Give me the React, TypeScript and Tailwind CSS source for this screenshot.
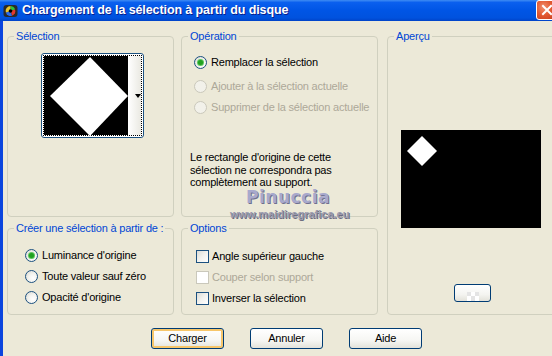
import React from "react";

function Radio({ checked = false, disabled = false }: { checked?: boolean; disabled?: boolean }) {
  return (
    <span
      className={
        "relative inline-flex items-center justify-center w-[13px] h-[13px] rounded-full border shrink-0 " +
        (disabled
          ? "border-[#CAC8BB] bg-[#F2F1EA]"
          : "border-[#1C5180] bg-[radial-gradient(circle_at_65%_65%,#ffffff_0%,#F3F3EF_45%,#D4D4CC_100%)]")
      }
    >
      {checked && <span className="w-[5px] h-[5px] rounded-full bg-[#21A121] shadow-[0_0_0_1px_#5DC65D]" />}
    </span>
  );
}

function Check({ disabled = false }: { disabled?: boolean }) {
  return (
    <span
      className={
        "inline-block w-[13px] h-[13px] border shrink-0 " +
        (disabled
          ? "border-[#CAC8BB] bg-white"
          : "border-[#1C5180] bg-[linear-gradient(135deg,#DCDCD7_0%,#F2F2EE_50%,#ffffff_100%)]")
      }
    />
  );
}

function Btn({ label, def = false }: { label: string; def?: boolean }) {
  return (
    <div
      className={
        "w-[73px] h-[21px] flex items-center justify-center rounded-[3px] border border-[#003C74] bg-[linear-gradient(to_bottom,#FFFFFF_0%,#F6F6F3_60%,#E3E2DA_100%)] text-black " +
        (def ? "shadow-[inset_0_0_0_2px_#F7C66A]" : "")
      }
    >
      {label}
    </div>
  );
}

function Group({
  title,
  className,
  children,
}: {
  title: string;
  className: string;
  children?: React.ReactNode;
}) {
  return (
    <fieldset className={"border border-[#D0D0BF] rounded-[4px] shrink-0 " + className}>
      <legend className="ml-[6px] px-[2px] leading-[13px] text-[#0046D5]">{title}</legend>
      {children}
    </fieldset>
  );
}

export default function App() {
  return (
    <div className="w-[552px] h-[356px] overflow-hidden bg-[#ECE9D8] font-['Liberation_Sans',Arial,sans-serif] text-[11px] tracking-[-0.2px] text-black">
      {/* Title bar */}
      <div className="h-[21px] flex items-center bg-[linear-gradient(to_bottom,#3F8CF3_0%,#0A5FEE_12%,#0055E5_50%,#0052DE_85%,#0043C8_100%)] relative">
        <svg width="15" height="15" viewBox="0 0 15 15" className="ml-[3px] shrink-0">
          <rect x="0.5" y="2" width="14" height="12" rx="3" fill="#2A2A2A" />
          <circle cx="7.5" cy="8" r="5" fill="#111" />
          <path d="M7.5 8 L7.5 3 A5 5 0 0 1 12.2 6.5 Z" fill="#2FBF3A" />
          <path d="M7.5 8 L12.2 6.5 A5 5 0 0 1 9 12.8 Z" fill="#E23A2E" />
          <path d="M7.5 8 L9 12.8 A5 5 0 0 1 2.8 9.5 Z" fill="#2C6BE8" />
          <path d="M7.5 8 L2.8 9.5 A5 5 0 0 1 7.5 3 Z" fill="#E8C530" />
          <circle cx="7.5" cy="8" r="1.8" fill="#000" />
        </svg>
        <span className="ml-[4px] text-white font-bold text-[12.5px] tracking-[-0.1px] leading-[21px] [text-shadow:1px_1px_0_#0A1E8C]">
          Chargement de la sélection à partir du disque
        </span>
        <div className="absolute left-[536px] top-[0px] w-[21px] h-[20px] rounded-[3px] border border-white bg-[radial-gradient(circle_at_35%_35%,#F0906E_0%,#E35A32_45%,#C4391A_100%)] flex items-center justify-center">
          <svg width="12" height="12" viewBox="0 0 12 12">
            <path d="M2 2 L10 10 M10 2 L2 10" stroke="white" strokeWidth="2" strokeLinecap="square" />
          </svg>
        </div>
      </div>

      {/* Body */}
      <div className="h-[335px] border-l-[3px] border-[#0B45DE] flex flex-col">
        <div className="flex pl-[4px] pt-[9px] relative">
          {/* Left column */}
          <div className="flex flex-col gap-[5px] w-[167px] shrink-0">
            <Group title="Sélection" className="h-[187px]">
              <div className="ml-[33px] mt-[10px] w-[103px] h-[85px] rounded-[3px] border border-[#1C5180] bg-white p-[1px]">
                <div className="h-full border border-dotted border-black flex">
                  <div className="w-[84px] h-full bg-black">
                    <svg width="84" height="81" viewBox="0 0 84 81">
                      <polygon points="46,1 84,40 46,80 6,40" fill="#ffffff" />
                    </svg>
                  </div>
                  <div className="flex-1 h-full bg-[linear-gradient(to_right,#ffffff,#EAE9E2)] relative">
                    <svg width="6" height="4" viewBox="0 0 6 4" className="absolute left-[7px] top-[38px]">
                      <polygon points="0,0 6,0 3,4" fill="#000" />
                    </svg>
                  </div>
                </div>
              </div>
            </Group>
            <Group title="Créer une sélection à partir de :" className="h-[93px]">
              <div className="flex flex-col pl-[17px] pt-[13px] gap-[7px]">
                <div className="flex items-center gap-[4px] h-[14px]">
                  <Radio checked />
                  <span>Luminance d'origine</span>
                </div>
                <div className="flex items-center gap-[4px] h-[14px]">
                  <Radio />
                  <span>Toute valeur sauf zéro</span>
                </div>
                <div className="flex items-center gap-[4px] h-[14px]">
                  <Radio />
                  <span>Opacité d'origine</span>
                </div>
              </div>
            </Group>
          </div>

          {/* Middle column */}
          <div className="flex flex-col gap-[5px] w-[197px] ml-[7px] shrink-0">
            <Group title="Opération" className="h-[187px]">
              <div className="flex flex-col pl-[12px] pt-[12px]">
                <div className="flex items-center gap-[4px] h-[14px]">
                  <Radio checked />
                  <span>Remplacer la sélection</span>
                </div>
                <div className="flex items-center gap-[4px] h-[14px] mt-[10px] text-[#ACA899]">
                  <Radio disabled />
                  <span>Ajouter à la sélection actuelle</span>
                </div>
                <div className="flex items-center gap-[4px] h-[14px] mt-[7px] text-[#ACA899]">
                  <Radio disabled />
                  <span>Supprimer de la sélection actuelle</span>
                </div>
              </div>
              <p className="pl-[8px] mt-[37px] leading-[12.5px] w-[180px]">
                Le rectangle d'origine de cette sélection ne correspondra pas complètement au support.
              </p>
            </Group>
            <Group title="Options" className="h-[93px]">
              <div className="flex flex-col pl-[14px] pt-[14px] gap-[7px]">
                <div className="flex items-center gap-[3px] h-[14px]">
                  <Check />
                  <span>Angle supérieur gauche</span>
                </div>
                <div className="flex items-center gap-[3px] h-[14px] text-[#ACA899]">
                  <Check disabled />
                  <span>Couper selon support</span>
                </div>
                <div className="flex items-center gap-[3px] h-[14px]">
                  <Check />
                  <span>Inverser la sélection</span>
                </div>
              </div>
            </Group>
          </div>

          {/* Aperçu */}
          <Group title="Aperçu" className="h-[285px] w-[180px] ml-[9px]">
            <div className="ml-[13px] mt-[87px] w-[140px] h-[98px] bg-black">
              <svg width="140" height="98" viewBox="0 0 140 98">
                <polygon points="21,6 36,21 21,36 6,21" fill="#ffffff" />
              </svg>
            </div>
            <div className="ml-[66px] mt-[56px] w-[37px] h-[18px] rounded-[3px] border border-[#003C74] bg-[linear-gradient(to_bottom,#FFFFFF_0%,#F4F4F0_60%,#E3E2DA_100%)] flex items-end justify-center">
              <svg width="12" height="9" viewBox="0 0 12 9">
                <rect x="0" y="0" width="12" height="9" fill="#ffffff" />
                <rect x="0" y="0" width="4" height="4" fill="#E4E4E4" />
                <rect x="8" y="0" width="4" height="4" fill="#E4E4E4" />
                <rect x="4" y="4" width="4" height="5" fill="#E4E4E4" />
              </svg>
            </div>
          </Group>

          {/* Watermark overlay */}
          <div className="absolute left-[243px] top-[167px] pointer-events-none">
            <span className="font-['DejaVu_Sans',sans-serif] font-bold text-[17px] leading-[18px] tracking-[0.5px] text-[#A8A9CC] [text-shadow:1px_1px_0_#6F7090]">
              Pinuccia
            </span>
          </div>
          <div className="absolute left-[227px] top-[185px] pointer-events-none">
            <span className="font-['Liberation_Sans',sans-serif] font-bold text-[11px] leading-[12px] tracking-normal text-[#9A9AAE] [text-shadow:1px_1px_0_#6E6E80]">
              www.maidiregrafica.eu
            </span>
          </div>
        </div>

        {/* Buttons */}
        <div className="flex pl-[148px] mt-[13px] gap-[26px]">
          <Btn label="Charger" def />
          <Btn label="Annuler" />
          <Btn label="Aide" />
        </div>
      </div>
    </div>
  );
}
